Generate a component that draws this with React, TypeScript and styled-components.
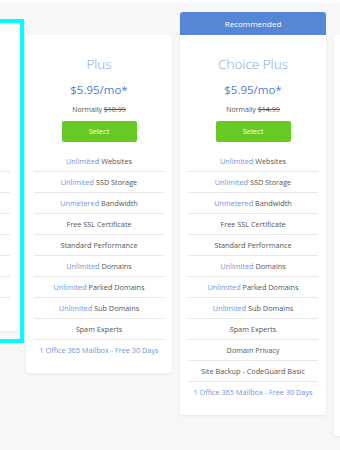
import { FC } from 'react'
import styled, { createGlobalStyle } from 'styled-components'

type Feature = {
  hl?: string
  text?: string
}

type Plan = {
  name: string
  price: string
  normally: string
  recommended?: boolean
  // cards that only peek in at the page edges: frame and row lines only
  peek?: 'left' | 'right'
  features: Feature[]
}

const base: Feature[] = [
  { hl: 'Unlimited', text: ' Websites' },
  { hl: 'Unlimited', text: ' SSD Storage' },
  { hl: 'Unmetered', text: ' Bandwidth' },
  { text: 'Free SSL Certificate' },
  { text: 'Standard Performance' },
  { hl: 'Unlimited', text: ' Domains' },
  { hl: 'Unlimited', text: ' Parked Domains' },
  { hl: 'Unlimited', text: ' Sub Domains' },
  { text: 'Spam Experts' },
]

const mailbox: Feature = { hl: '1 Office 365 Mailbox - Free 30 Days' }

const blank = (n: number): Feature[] => Array.from({ length: n }, () => ({}))

const plans: Plan[] = [
  {
    name: '',
    price: '',
    normally: '',
    peek: 'left',
    features: blank(8),
  },
  {
    name: 'Plus',
    price: '$5.95/mo*',
    normally: '$10.99',
    features: [...base, mailbox],
  },
  {
    name: 'Choice Plus',
    price: '$5.95/mo*',
    normally: '$14.99',
    recommended: true,
    features: [
      ...base,
      { text: 'Domain Privacy' },
      { text: 'Site Backup - CodeGuard Basic' },
      mailbox,
    ],
  },
  {
    name: '',
    price: '',
    normally: '',
    peek: 'right',
    features: blank(13),
  },
]

const PlanCard: FC<{ plan: Plan }> = ({ plan }) => (
  <Card $top={plan.recommended ? 0 : plan.peek === 'left' ? 12 : 23}>
    {plan.recommended && <Banner>Recommended</Banner>}
    <Body $flat={plan.recommended} $extra={plan.peek === 'left' ? 11 : 0}>
      <Title>{plan.name}</Title>
      <Price>{plan.price}</Price>
      <Normally>
        {plan.normally && (
          <>
            Normally <s>{plan.normally}</s>
          </>
        )}
      </Normally>
      <SelectButton>{plan.peek ? null : 'Select'}</SelectButton>
      <Features>
        {plan.features.map((f, i) => (
          <FeatureRow key={i}>
            {f.hl && <Hl>{f.hl}</Hl>}
            {f.text}
          </FeatureRow>
        ))}
      </Features>
    </Body>
  </Card>
)

const App: FC = () => (
  <Page>
    <GlobalStyle />
    <TopStrip />
    <Cards>
      {plans.map((p, i) => (
        <PlanCard key={i} plan={p} />
      ))}
    </Cards>
    <Highlight />
  </Page>
)

const GlobalStyle = createGlobalStyle`
  body {
    margin: 0;
    background-color: #f7f7f7;
    font-family: "Open Sans", "DejaVu Sans", sans-serif;
  }
`

const Page = styled.div`
  position: relative;
  width: 340px;
  height: 450px;
  overflow: hidden;
  background-color: #f7f7f7;
`

const TopStrip = styled.div`
  height: 3px;
  background-color: #fdfdfd;
`

const Cards = styled.div`
  display: flex;
  align-items: flex-start;
  gap: 8px;
  margin-left: -128px;
  padding-top: 9px;
`

const Card = styled.div<{ $top: number }>`
  flex: 0 0 146px;
  width: 146px;
  margin-top: ${(p) => p.$top}px;
  border-radius: 3px;
  box-shadow: 0 1px 3px rgba(0, 0, 0, 0.07);
`

const Banner = styled.div`
  height: 23px;
  line-height: 23px;
  text-align: center;
  font-size: 8px;
  color: #ffffff;
  background-color: #5587d5;
  border-radius: 3px 3px 0 0;
`

const Body = styled.div<{ $flat?: boolean; $extra: number }>`
  display: flex;
  flex-direction: column;
  align-items: center;
  padding: ${(p) => 20 + p.$extra}px 8px 13px;
  background-color: #ffffff;
  border-radius: ${(p) => (p.$flat ? '0 0 3px 3px' : '3px')};
`

const Title = styled.div`
  min-height: 18px;
  font-size: 13.5px;
  line-height: 18px;
  font-weight: 300;
  color: #80a7e6;
`

const Price = styled.div`
  min-height: 16px;
  margin-top: 9px;
  font-size: 11.5px;
  line-height: 16px;
  color: #4a7fd5;
`

const Normally = styled.div`
  min-height: 10px;
  margin-top: 7px;
  font-size: 7px;
  line-height: 10px;
  color: #555555;
`

const SelectButton = styled.div`
  margin-top: 6px;
  width: 75px;
  height: 21px;
  line-height: 21px;
  text-align: center;
  font-size: 7.5px;
  color: #ffffff;
  background-color: #66c924;
  border-radius: 2px;
`

const Features = styled.div`
  align-self: stretch;
  margin-top: 9px;
`

const FeatureRow = styled.div`
  height: 20px;
  line-height: 20px;
  text-align: center;
  font-size: 7.3px;
  color: #555555;
  white-space: nowrap;
  border-bottom: 1px solid #e8e8e8;

  &:last-child {
    border-bottom: none;
  }
`

const Hl = styled.span`
  color: #6e96d9;
`

const Highlight = styled.div`
  position: absolute;
  left: -10px;
  top: 19px;
  width: 34px;
  height: 324px;
  box-sizing: border-box;
  border: 4px solid #00ffff;
`

export default App
